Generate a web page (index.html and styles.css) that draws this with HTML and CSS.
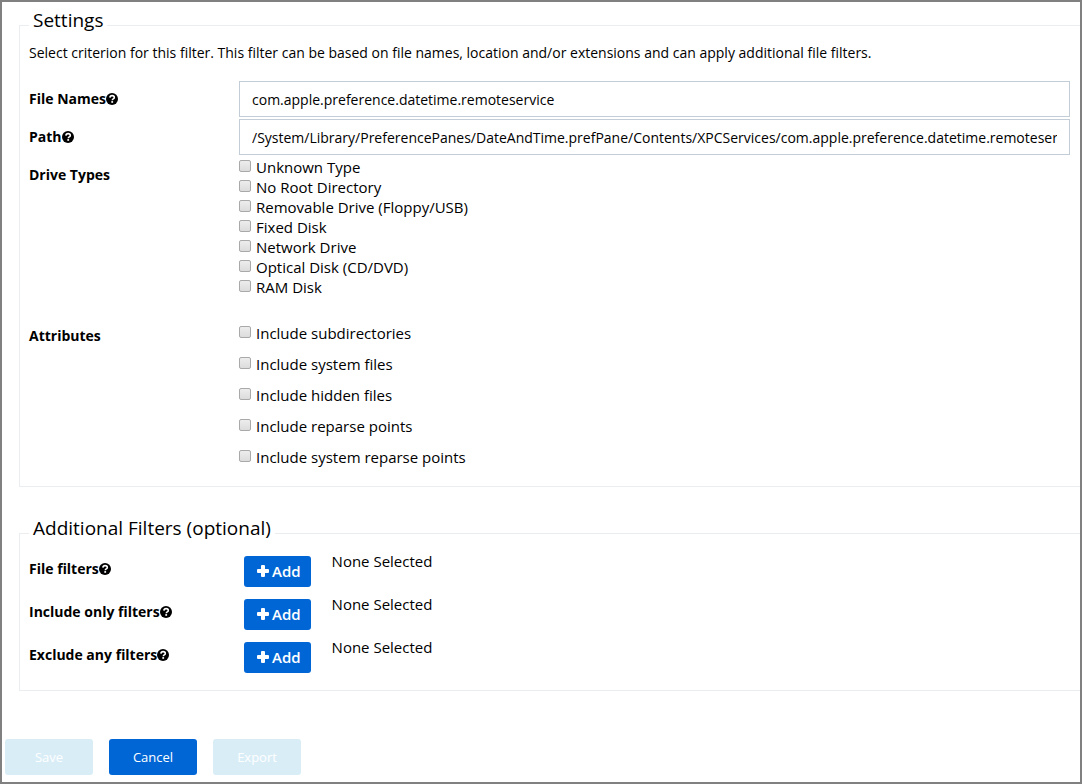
FILE: index.html
```html
<!DOCTYPE html>
<html lang="en">
<head>
<meta charset="utf-8">
<title>Filter settings</title>
<link rel="stylesheet" href="styles.css">
</head>
<body>
<svg class="sprite" aria-hidden="true">
  <symbol id="help" viewBox="0 0 12 12">
    <circle cx="6" cy="6" r="6" fill="#000"/>
    <path d="M3.900 4.600C4 3.200 4.900 2.600 6.100 2.600c1.300 0 2.200.7 2.200 1.800 0 1.500-2 1.500-2 2.800" fill="none" stroke="#fff" stroke-width="1.600"/>
    <rect x="5.300" y="8.100" width="1.800" height="1.700" fill="#fff"/>
  </symbol>
  <symbol id="plus" viewBox="0 0 12 12">
    <path d="M5 0h2q1 0 1 1v3h3q1 0 1 1v2q0 1-1 1H8v3q0 1-1 1H5q-1 0-1-1V8H1q-1 0-1-1V5q0-1 1-1h3V1q0-1 1-1z" fill="#fff"/>
  </symbol>
</svg>
<form class="page">
  <fieldset class="group settings">
    <legend class="group-title">Settings</legend>
    <p class="intro">Select criterion for this filter. This filter can be based on file names, location and/or extensions and can apply additional file filters.</p>
    <div class="row">
      <label class="name" for="file-names">File Names<svg class="help"><use href="#help"/></svg></label>
      <input class="text" id="file-names" type="text" value="com.apple.preference.datetime.remoteservice">
    </div>
    <div class="row">
      <label class="name" for="path">Path<svg class="help"><use href="#help"/></svg></label>
      <input class="text" id="path" type="text" value="/System/Library/PreferencePanes/DateAndTime.prefPane/Contents/XPCServices/com.apple.preference.datetime.remoteservice.xpc">
    </div>
    <div class="row drives" role="group" aria-labelledby="drive-types">
      <span class="name" id="drive-types">Drive Types</span>
      <div class="checks">
        <label class="check"><input class="box" type="checkbox">Unknown Type</label>
        <label class="check"><input class="box" type="checkbox">No Root Directory</label>
        <label class="check"><input class="box" type="checkbox">Removable Drive (Floppy/USB)</label>
        <label class="check"><input class="box" type="checkbox">Fixed Disk</label>
        <label class="check"><input class="box" type="checkbox">Network Drive</label>
        <label class="check"><input class="box" type="checkbox">Optical Disk (CD/DVD)</label>
        <label class="check"><input class="box" type="checkbox">RAM Disk</label>
      </div>
    </div>
    <div class="row attributes" role="group" aria-labelledby="attributes">
      <span class="name" id="attributes">Attributes</span>
      <div class="checks spaced">
        <label class="check"><input class="box" type="checkbox">Include subdirectories</label>
        <label class="check"><input class="box" type="checkbox">Include system files</label>
        <label class="check"><input class="box" type="checkbox">Include hidden files</label>
        <label class="check"><input class="box" type="checkbox">Include reparse points</label>
        <label class="check"><input class="box" type="checkbox">Include system reparse points</label>
      </div>
    </div>
  </fieldset>
  <fieldset class="group filters">
    <legend class="group-title">Additional Filters (optional)</legend>
    <div class="row filter">
      <span class="name" id="file-filters">File filters<svg class="help"><use href="#help"/></svg></span>
      <div class="picker"><button class="add" type="button" aria-describedby="file-filters"><svg class="plus"><use href="#plus"/></svg>Add</button><span class="chosen">None Selected</span></div>
    </div>
    <div class="row filter">
      <span class="name" id="include-filters">Include only filters<svg class="help"><use href="#help"/></svg></span>
      <div class="picker"><button class="add" type="button" aria-describedby="include-filters"><svg class="plus"><use href="#plus"/></svg>Add</button><span class="chosen">None Selected</span></div>
    </div>
    <div class="row filter">
      <span class="name" id="exclude-filters">Exclude any filters<svg class="help"><use href="#help"/></svg></span>
      <div class="picker"><button class="add" type="button" aria-describedby="exclude-filters"><svg class="plus"><use href="#plus"/></svg>Add</button><span class="chosen">None Selected</span></div>
    </div>
  </fieldset>
  <div class="actions">
    <button class="action" type="submit" disabled>Save</button>
    <button class="action" type="button">Cancel</button>
    <button class="action" type="button" disabled>Export</button>
  </div>
</form>
</body>
</html>
```
FILE: styles.css
```css
* {
  box-sizing: border-box;
}

body {
  margin: 0;
  background: #fff;
  color: #000;
  font: 14px/20px "Open Sans", "Noto Sans", sans-serif;
}

button,
input {
  margin: 0;
  font: inherit;
}

.sprite {
  display: none;
}

.page {
  min-height: 100vh;
  padding: 6px 0 7px;
  border: 2px solid #808080;
}

.group {
  min-width: 0;
  margin: 0 0 0 17px;
  padding: 0 10px 13px 9px;
  border: 1px solid #ebeef1;
  border-right: 0;
}

.filters {
  margin-top: 29px;
  padding-bottom: 11px;
}

.group-title {
  padding: 0 4px 10px;
  font-size: 19px;
  line-height: 24px;
}

.intro {
  margin: 1px 0 18px;
}

.row {
  display: grid;
  grid-template-columns: 210px minmax(0, 1fr);
  align-items: start;
  margin-bottom: 2px;
}

.name {
  display: flex;
  align-items: center;
  padding-top: 8px;
  font-weight: 700;
}

.help {
  width: 12px;
  height: 12px;
}

.text {
  width: 100%;
  height: 36px;
  padding: 0 12px;
  border: 1px solid #c2cdd8;
  background: #fff;
  color: #000;
}

.checks {
  display: grid;
  justify-items: start;
  font-size: 15px;
}

.drives {
  margin-bottom: 21px;
}

.attributes {
  margin-bottom: 0;
}

.check {
  display: flex;
  align-items: flex-start;
  gap: 5px;
}

.spaced {
  padding: 5px 0 6px;
  gap: 11px;
}

.box {
  appearance: none;
  width: 12px;
  height: 12px;
  margin-top: 3px;
  border: 1px solid #a9a9a9;
  border-radius: 2px;
  background: linear-gradient(#ededed, #dcdcdc);
}

.box:checked {
  background: #0066d6;
}

.filter {
  padding-top: 1px;
  margin-bottom: 0;
  min-height: 43px;
}

.picker {
  display: flex;
  align-items: center;
  gap: 21px;
  padding: 5px 5px 0;
}

.chosen {
  align-self: flex-start;
  margin-top: -5px;
  font-size: 15px;
}

.add {
  display: flex;
  align-items: center;
  gap: 3px;
  height: 31px;
  padding: 0 10px 2px 13px;
  border: 0;
  border-radius: 3px;
  background: #0066d6;
  color: #fff;
  font-size: 15px;
  font-weight: 600;
}

.plus {
  width: 12px;
  height: 12px;
}

.actions {
  display: flex;
  gap: 16px;
  margin: 48px 0 0 3px;
}

.action {
  width: 88px;
  height: 36px;
  padding: 0;
  border: 0;
  border-radius: 3px;
  background: #0066d6;
  color: #fff;
  font-size: 13px;
}

.action:disabled {
  background: #d9edf7;
}
```
